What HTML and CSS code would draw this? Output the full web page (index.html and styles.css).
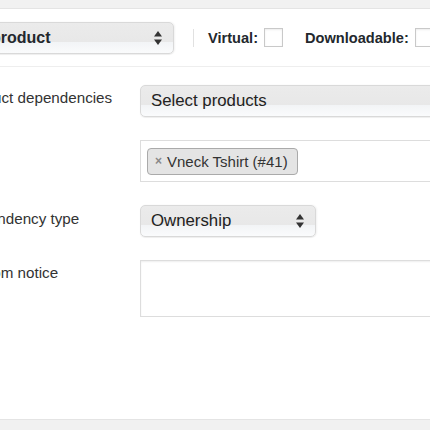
FILE: index.html
```html
<!DOCTYPE html>
<html>
<head>
<meta charset="utf-8">
<link rel="stylesheet" href="styles.css">
</head>
<body>
<div class="page">
  <div class="top-band"></div>
  <div class="panel">
    <div class="header">
      <div class="select select-type">
        <span class="select-text">Simple product</span>
        <svg class="arrows" width="8" height="14" viewBox="0 0 8 14"><polygon points="4,0 8,5.5 0,5.5" fill="#333"/><polygon points="0,8.5 8,8.5 4,14" fill="#333"/></svg>
      </div>
      <span class="sep"></span>
      <label class="check">Virtual: <span class="box"></span></label>
      <label class="check check-dl">Downloadable: <span class="box"></span></label>
    </div>
    <div class="fields">
      <div class="label">Product dependencies</div>
      <div class="select select-wide"><span class="select-text">Select products</span></div>

      <div class="label"></div>
      <div class="tagbox"><span class="tag"><span class="tag-x">×</span>Vneck Tshirt (#41)</span></div>

      <div class="label label-type">Dependency type</div>
      <div class="select select-dep">
        <span class="select-text">Ownership</span>
        <svg class="arrows" width="8" height="14" viewBox="0 0 8 14"><polygon points="4,0 8,5.5 0,5.5" fill="#333"/><polygon points="0,8.5 8,8.5 4,14" fill="#333"/></svg>
      </div>

      <div class="label">Custom notice</div>
      <div class="textarea"></div>
    </div>
  </div>
  <div class="bottom-band"></div>
</div>
</body>
</html>
```

FILE: styles.css
```css
html, body {
  margin: 0;
  padding: 0;
  background: #fff;
}
.page {
  width: 430px;
  height: 430px;
  overflow: hidden;
  font-family: "Liberation Sans", Arial, sans-serif;
  color: #333;
  display: flex;
  flex-direction: column;
}
.top-band {
  height: 8px;
  flex: none;
  background: #f1f1f1;
  border-bottom: 1px solid #e4e4e4;
}
.panel {
  height: 410px;
  flex: none;
  background: #fff;
}
.bottom-band {
  flex: 1;
  background: #f1f1f1;
  border-top: 1px solid #e4e4e4;
}
.header {
  height: 57px;
  border-bottom: 1px solid #eeeeee;
  display: flex;
  align-items: center;
  white-space: nowrap;
}
.select {
  box-sizing: border-box;
  height: 32px;
  border: 1px solid #d9d9d9;
  border-radius: 5px;
  background: linear-gradient(to bottom, #ebebeb 0%, #e8e8e8 62%, #f2f4f6 64%, #fafbfc 100%);
  box-shadow: 0 1px 1px rgba(0, 0, 0, 0.06), 1px 0 2px rgba(0, 0, 0, 0.05);
  display: flex;
  align-items: center;
  padding-left: 10px;
  padding-right: 11px;
  color: #222;
  font-size: 16.8px;
  flex: none;
}
.select-text {
  flex: 1;
  white-space: nowrap;
}
.select-type {
  width: 251px;
  margin-left: -77px;
  font-weight: bold;
  font-size: 16px;
  color: #23282d;
}
.arrows {
  flex: none;
  display: block;
}
.sep {
  width: 1px;
  height: 18px;
  background: #e1e1e1;
  margin-left: 19px;
  margin-right: 14px;
  flex: none;
}
.check {
  display: flex;
  align-items: center;
  font-weight: bold;
  font-size: 14.6px;
  color: #23282d;
  flex: none;
}
.check-dl {
  margin-left: 22px;
}
.box {
  box-sizing: border-box;
  width: 19px;
  height: 19px;
  border: 1px solid #c9c9c9;
  background: #fff;
  margin-left: 6px;
  box-shadow: inset 0 1px 2px rgba(0, 0, 0, 0.08);
}
.fields {
  margin-left: -39px;
  padding-top: 18px;
  display: grid;
  grid-template-columns: 179px 340px;
  row-gap: 23px;
}
.label {
  font-size: 15.2px;
  line-height: 20px;
  padding-top: 3px;
  color: #333;
  white-space: nowrap;
}
.label-type {
  padding-top: 4px;
}
.select-wide {
  width: 340px;
}
.select-dep {
  width: 176px;
}
.tagbox {
  box-sizing: border-box;
  height: 42px;
  border: 1px solid #dddddd;
  background: #fff;
  display: flex;
  align-items: center;
  padding-left: 6px;
}
.tag {
  box-sizing: border-box;
  height: 27px;
  width: 151px;
  display: flex;
  align-items: center;
  padding-left: 7px;
  background: #e4e4e4;
  border: 1px solid #aaaaaa;
  border-radius: 4px;
  font-size: 15px;
  color: #333;
  white-space: nowrap;
}
.tag-x {
  color: #888;
  font-weight: bold;
  font-size: 12px;
  margin-right: 5px;
}
.textarea {
  box-sizing: border-box;
  height: 57px;
  border: 1px solid #dddddd;
  background: #fff;
  box-shadow: inset 0 1px 2px rgba(0, 0, 0, 0.07);
}
```
